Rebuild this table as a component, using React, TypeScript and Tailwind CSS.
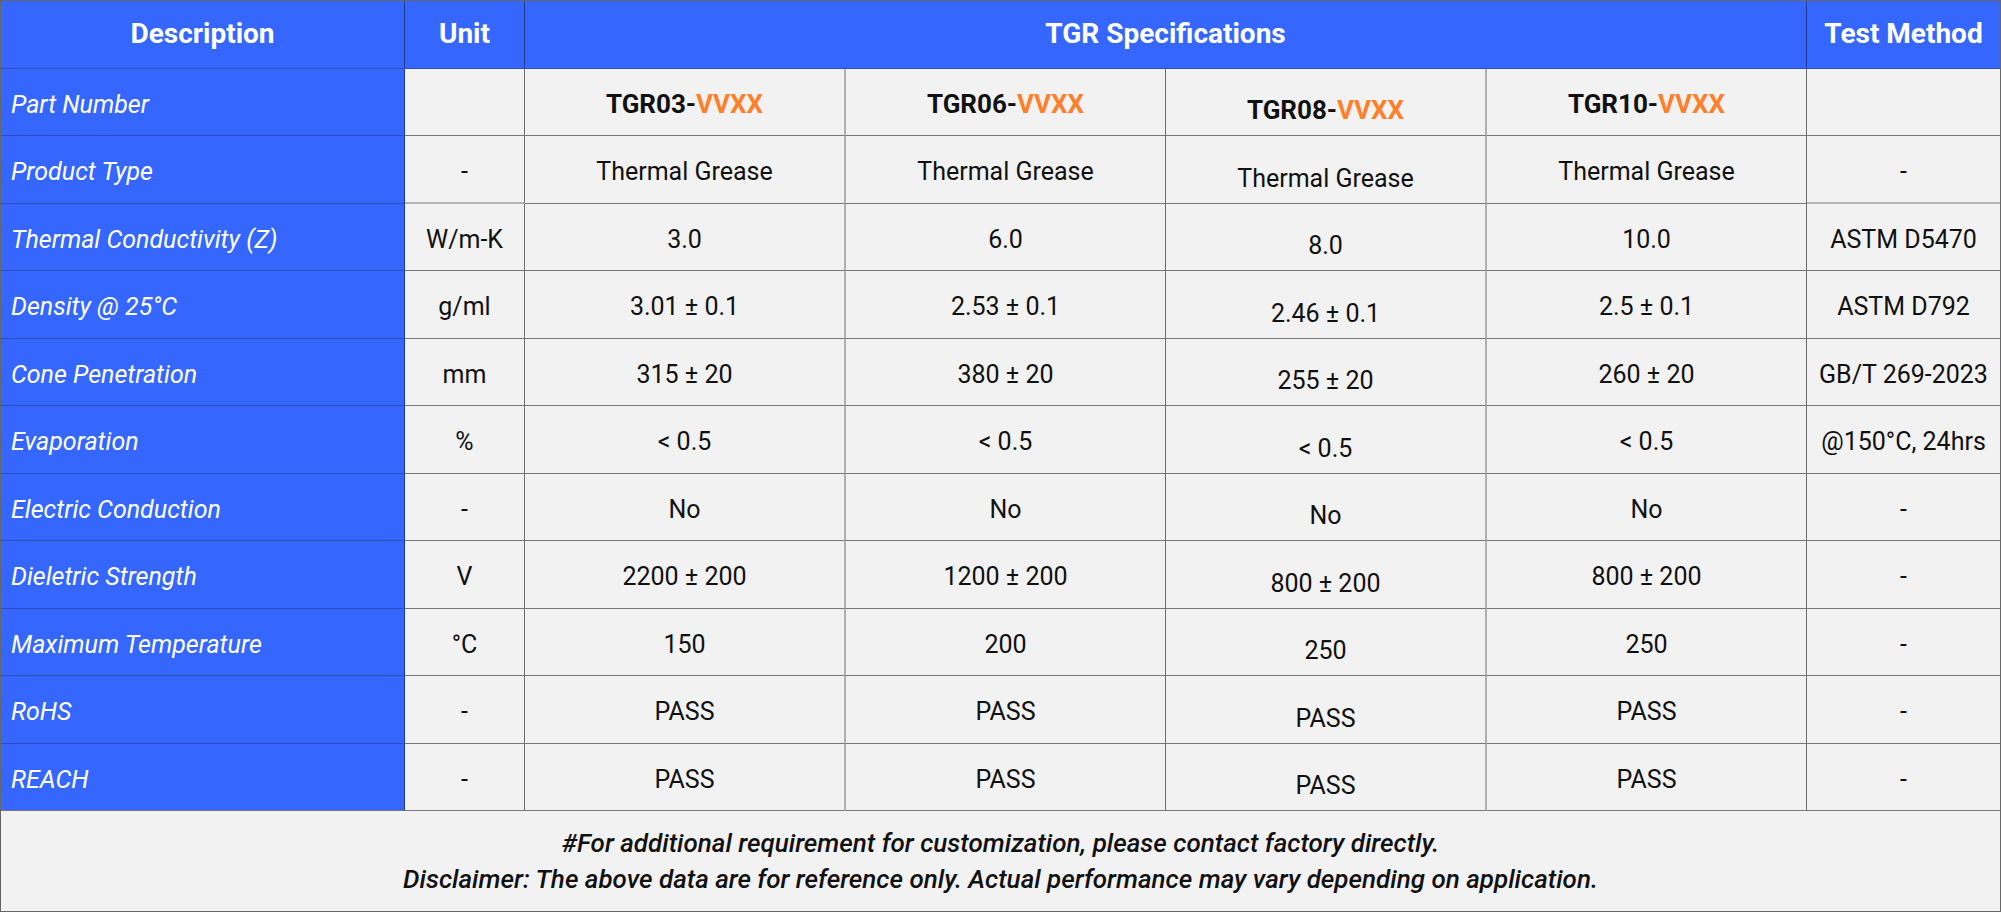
import React from "react";

type Row = { label: string; unit: string; vals: string[]; test: string };

const rows: Row[] = [
  { label: "Part Number", unit: "", vals: ["TGR03", "TGR06", "TGR08", "TGR10"], test: "" },
  { label: "Product Type", unit: "-", vals: ["Thermal Grease", "Thermal Grease", "Thermal Grease", "Thermal Grease"], test: "-" },
  { label: "Thermal Conductivity (Z)", unit: "W/m-K", vals: ["3.0", "6.0", "8.0", "10.0"], test: "ASTM D5470" },
  { label: "Density @ 25°C", unit: "g/ml", vals: ["3.01 ± 0.1", "2.53 ± 0.1", "2.46 ± 0.1", "2.5 ± 0.1"], test: "ASTM D792" },
  { label: "Cone Penetration", unit: "mm", vals: ["315 ± 20", "380 ± 20", "255 ± 20", "260 ± 20"], test: "GB/T 269-2023" },
  { label: "Evaporation", unit: "%", vals: ["< 0.5", "< 0.5", "< 0.5", "< 0.5"], test: "@150°C, 24hrs" },
  { label: "Electric Conduction", unit: "-", vals: ["No", "No", "No", "No"], test: "-" },
  { label: "Dieletric Strength", unit: "V", vals: ["2200 ± 200", "1200 ± 200", "800 ± 200", "800 ± 200"], test: "-" },
  { label: "Maximum Temperature", unit: "°C", vals: ["150", "200", "250", "250"], test: "-" },
  { label: "RoHS", unit: "-", vals: ["PASS", "PASS", "PASS", "PASS"], test: "-" },
  { label: "REACH", unit: "-", vals: ["PASS", "PASS", "PASS", "PASS"], test: "-" },
];

function PartNo({ code }: { code: string }) {
  return (
    <span className="font-bold text-[26px] text-[#111]">
      {code}-<span className="text-[#ff7f2a]">VVXX</span>
    </span>
  );
}

export default function App() {
  return (
    <div
      className="w-[2001px] h-[912px] bg-[#f2f2f2] border border-[#666] flex flex-col overflow-hidden"
      style={{ fontFamily: "Roboto, 'Liberation Sans', sans-serif" }}
    >
      {/* Header */}
      <div className="flex h-[67.5px] shrink-0 bg-[#3567fe] text-white font-bold text-[28px] border-b border-[#2a4fc0]">
        <div className="w-[404px] shrink-0 flex items-center justify-center border-r border-[#1f3a93]">Description</div>
        <div className="w-[120px] shrink-0 flex items-center justify-center border-r border-[#1f3a93]">Unit</div>
        <div className="flex-1 flex items-center justify-center border-r border-[#1f3a93]">TGR Specifications</div>
        <div className="w-[193px] shrink-0 flex items-center justify-center">Test Method</div>
      </div>

      {/* Body rows */}
      {rows.map((r, i) => {
        const last = i === rows.length - 1;
        const lightBottom = i === 1;
        return (
          <div key={r.label} className="flex h-[67.5px] shrink-0 text-[25px] text-[#111]">
            <div
              className={
                "w-[404px] shrink-0 flex items-center pl-[10px] pt-[5px] bg-[#3567fe] text-white italic border-r border-r-[#1f3a93] border-b " +
                (last ? "border-b-[#777]" : "border-b-[#2b4fbf]")
              }
            >
              {r.label}
            </div>
            <div
              className={
                "w-[120px] shrink-0 flex items-center justify-center pt-[5px] border-r border-r-[#6e6e6e] " +
                (lightBottom ? "border-b-2 border-b-[#b4b4b4]" : "border-b border-b-[#777]")
              }
            >
              {r.unit}
            </div>
            <div className="flex-1 flex items-center justify-center pt-[5px] border-r-2 border-r-[#b0b0b0] border-b border-b-[#777]">
              {i === 0 ? <PartNo code={r.vals[0]} /> : r.vals[0]}
            </div>
            <div className="flex-1 flex items-center justify-center pt-[5px] border-r border-r-[#6e6e6e] border-b border-b-[#777]">
              {i === 0 ? <PartNo code={r.vals[1]} /> : r.vals[1]}
            </div>
            <div className="flex-1 flex items-center justify-center pt-[18px] border-r-2 border-r-[#b0b0b0] border-b border-b-[#777]">
              {i === 0 ? <PartNo code={r.vals[2]} /> : r.vals[2]}
            </div>
            <div className="flex-1 flex items-center justify-center pt-[5px] border-r border-r-[#6e6e6e] border-b border-b-[#777]">
              {i === 0 ? <PartNo code={r.vals[3]} /> : r.vals[3]}
            </div>
            <div
              className={
                "w-[193px] shrink-0 flex items-center justify-center pt-[5px] " +
                (lightBottom ? "border-b-2 border-b-[#b4b4b4]" : "border-b border-b-[#777]")
              }
            >
              {r.test}
            </div>
          </div>
        );
      })}

      {/* Footer */}
      <div className="flex-1 flex flex-col items-center justify-center italic font-medium text-[26px] leading-[36px] text-[#111]">
        <div>#For additional requirement for customization, please contact factory directly.</div>
        <div>Disclaimer: The above data are for reference only. Actual performance may vary depending on application.</div>
      </div>
    </div>
  );
}
